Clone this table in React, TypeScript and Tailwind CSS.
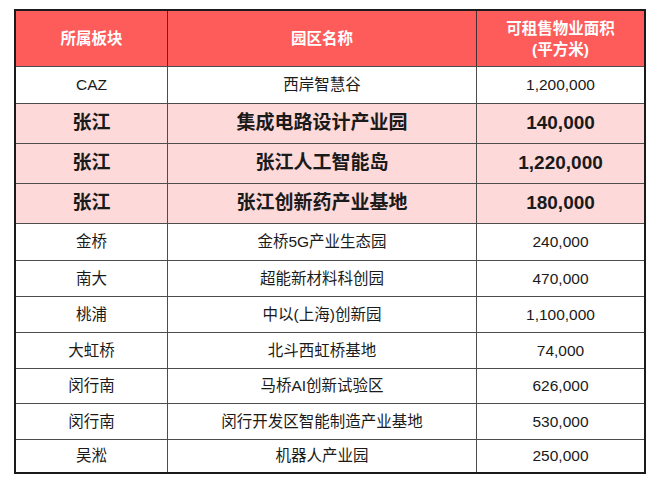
import React from "react";

type Row = { a: string; b: string; c: string; bold?: boolean; h: string };

const rows: Row[] = [
  { a: "CAZ", b: "西岸智慧谷", c: "1,200,000", h: "h-[37px]" },
  { a: "张江", b: "集成电路设计产业园", c: "140,000", bold: true, h: "h-[40px]" },
  { a: "张江", b: "张江人工智能岛", c: "1,220,000", bold: true, h: "h-[40px]" },
  { a: "张江", b: "张江创新药产业基地", c: "180,000", bold: true, h: "h-[40px]" },
  { a: "金桥", b: "金桥5G产业生态园", c: "240,000", h: "h-[37px]" },
  { a: "南大", b: "超能新材料科创园", c: "470,000", h: "h-[36px]" },
  { a: "桃浦", b: "中以(上海)创新园", c: "1,100,000", h: "h-[36px]" },
  { a: "大虹桥", b: "北斗西虹桥基地", c: "74,000", h: "h-[36px]" },
  { a: "闵行南", b: "马桥AI创新试验区", c: "626,000", h: "h-[35px]" },
  { a: "闵行南", b: "闵行开发区智能制造产业基地", c: "530,000", h: "h-[36px]" },
  { a: "吴淞", b: "机器人产业园", c: "250,000", h: "h-[33px]" },
];

export default function App() {
  return (
    <div
      className="w-[660px] h-[492px] bg-white pt-[9px] pl-[14px] text-[#1a1a1a]"
      style={{ fontFamily: '"Liberation Sans", "Noto Sans CJK SC", sans-serif' }}
    >
      <div className="w-[632px] border-2 border-[#1a1a1a] flex flex-col">
        <div className="flex h-[55px] bg-[#fe5b5b] text-white font-bold text-[15.5px] leading-[21px]">
          <div className="w-[151px] flex items-center justify-center">所属板块</div>
          <div className="w-[309px] border-l border-[#4a3030] flex items-center justify-center">园区名称</div>
          <div className="w-[168px] border-l border-[#4a3030] flex flex-col items-center justify-center text-center">
            <span>可租售物业面积</span>
            <span>(平方米)</span>
          </div>
        </div>
        {rows.map((r, i) => (
          <div
            key={i}
            className={`flex box-border border-t border-[#4d4d4d] ${r.h} ${
              r.bold ? "bg-[#fdd9d9] font-bold text-[19px]" : "bg-white text-[15.5px]"
            }`}
          >
            <div className="w-[151px] flex items-center justify-center">{r.a}</div>
            <div className="w-[309px] border-l border-[#4d4d4d] flex items-center justify-center">{r.b}</div>
            <div className="w-[168px] border-l border-[#4d4d4d] flex items-center justify-center">{r.c}</div>
          </div>
        ))}
      </div>
    </div>
  );
}
